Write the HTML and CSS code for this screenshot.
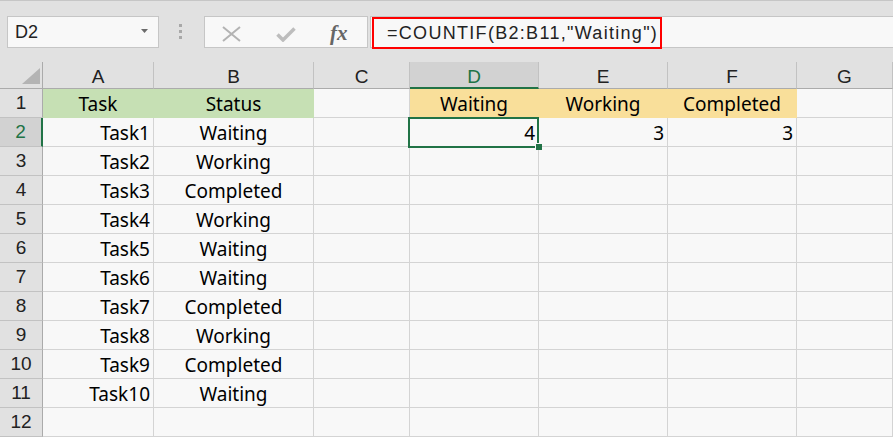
FILE: index.html
```html
<!DOCTYPE html>
<html lang="ja">
<head>
<meta charset="utf-8">
<title>COUNTIF</title>
<link rel="stylesheet" href="styles.css">
</head>
<body>
<div class="toolbar">
  <div class="namebox"><span class="nb-text">D2</span><svg class="caret" width="7" height="4" viewBox="0 0 7 4"><path d="M0 0H7L3.5 4Z" fill="#6b6b6b"/></svg></div>
  <div class="grip"><i></i><i></i><i></i></div>
  <div class="fbtns">
    <svg class="ic-x" width="19" height="16" viewBox="0 0 19 16"><path d="M1 1L18 15M18 1L1 15" stroke="#b3b3b3" stroke-width="2" fill="none"/></svg>
    <svg class="ic-ok" width="20" height="15" viewBox="0 0 20 15"><path d="M1.5 7.5L7 13L18.5 1.5" stroke="#bdbdbd" stroke-width="3.5" fill="none"/></svg>
    <span class="fx">fx</span>
  </div>
  <div class="finput"><span class="formula">=COUNTIF(B2:B11,"Waiting")</span></div>
</div>
<div class="sheet">
  <div class="corner"><svg width="18" height="16" viewBox="0 0 18 16"><path d="M18 0V16H0Z" fill="#b4b4b4"/></svg></div>
  <div class="ch">A</div><div class="ch">B</div><div class="ch">C</div><div class="ch sel">D</div><div class="ch">E</div><div class="ch">F</div><div class="ch">G</div>

  <div class="rh">1</div>
  <div class="c m g">Task</div><div class="c m g">Status</div><div class="c"></div><div class="c m y">Waiting</div><div class="c m y">Working</div><div class="c m y">Completed</div><div class="c"></div>

  <div class="rh sel">2</div>
  <div class="c r">Task1</div><div class="c m">Waiting</div><div class="c"></div><div class="c r active">4<span class="selbox"></span><span class="handle"></span></div><div class="c r">3</div><div class="c r">3</div><div class="c"></div>

  <div class="rh">3</div>
  <div class="c r">Task2</div><div class="c m">Working</div><div class="c"></div><div class="c"></div><div class="c"></div><div class="c"></div><div class="c"></div>

  <div class="rh">4</div>
  <div class="c r">Task3</div><div class="c m">Completed</div><div class="c"></div><div class="c"></div><div class="c"></div><div class="c"></div><div class="c"></div>

  <div class="rh">5</div>
  <div class="c r">Task4</div><div class="c m">Working</div><div class="c"></div><div class="c"></div><div class="c"></div><div class="c"></div><div class="c"></div>

  <div class="rh">6</div>
  <div class="c r">Task5</div><div class="c m">Waiting</div><div class="c"></div><div class="c"></div><div class="c"></div><div class="c"></div><div class="c"></div>

  <div class="rh">7</div>
  <div class="c r">Task6</div><div class="c m">Waiting</div><div class="c"></div><div class="c"></div><div class="c"></div><div class="c"></div><div class="c"></div>

  <div class="rh">8</div>
  <div class="c r">Task7</div><div class="c m">Completed</div><div class="c"></div><div class="c"></div><div class="c"></div><div class="c"></div><div class="c"></div>

  <div class="rh">9</div>
  <div class="c r">Task8</div><div class="c m">Working</div><div class="c"></div><div class="c"></div><div class="c"></div><div class="c"></div><div class="c"></div>

  <div class="rh">10</div>
  <div class="c r">Task9</div><div class="c m">Completed</div><div class="c"></div><div class="c"></div><div class="c"></div><div class="c"></div><div class="c"></div>

  <div class="rh">11</div>
  <div class="c r">Task10</div><div class="c m">Waiting</div><div class="c"></div><div class="c"></div><div class="c"></div><div class="c"></div><div class="c"></div>

  <div class="rh">12</div>
  <div class="c"></div><div class="c"></div><div class="c"></div><div class="c"></div><div class="c"></div><div class="c"></div><div class="c"></div>
</div>
</body>
</html>
```
FILE: styles.css
```css
* { box-sizing: border-box; }
html, body { margin: 0; padding: 0; }
body {
  width: 893px;
  height: 437px;
  overflow: hidden;
  background: #e1e1e1;
  font-family: "Liberation Sans", Arial, sans-serif;
  color: #222;
}

/* ---------- formula toolbar ---------- */
.toolbar {
  height: 62px;
  border-top: 1px solid #c6c6c6;
  padding-top: 15px;
  display: flex;
  align-items: flex-start;
}
.namebox {
  margin-left: 7px;
  width: 152px;
  height: 32px;
  border: 1px solid #c6c6c6;
  background: #f8f8f8;
  display: flex;
  align-items: center;
  justify-content: space-between;
  padding: 0 10px 0 7px;
  font-size: 18px;
}
.caret { margin-bottom: 2px; }
.grip {
  margin-left: 20px;
  margin-top: 8px;
  display: flex;
  flex-direction: column;
  gap: 3px;
}
.grip i { display: block; width: 3px; height: 3px; background: #a8a8a8; }
.fbtns {
  margin-left: 22px;
  width: 164px;
  height: 32px;
  border: 1px solid #c6c6c6;
  background: #f8f8f8;
  display: flex;
  align-items: flex-start;
  padding-left: 17px;
}
.ic-x { margin-top: 9px; }
.ic-ok { margin-left: 35px; margin-top: 10px; }
.fx {
  margin-left: 34px;
  margin-top: 5px;
  font-family: "Liberation Serif", "Times New Roman", serif;
  font-style: italic;
  font-weight: bold;
  font-size: 21px;
  line-height: 22px;
  color: #666;
}
.finput {
  flex: 1;
  margin-left: 2px;
  height: 32px;
  border: 1px solid #c6c6c6;
  border-right: none;
  background: #f8f8f8;
  display: flex;
  align-items: flex-start;
  padding-left: 1px;
}
.formula {
  display: block;
  width: 290px;
  height: 32px;
  border: 2px solid #ff0000;
  padding-left: 13px;
  font-size: 18px;
  letter-spacing: 1.3px;
  line-height: 29px;
  white-space: nowrap;
  color: #222;
}

/* ---------- sheet grid ---------- */
.sheet {
  display: grid;
  grid-template-columns: 43px 111px 160px 96px 129px 129px 129px 1fr;
  grid-template-rows: 27px repeat(12, 29px);
  background: #f8f8f8;
}
.corner {
  background: #e1e1e1;
  border-right: 1px solid #ababab;
  border-bottom: 1px solid #ababab;
  display: flex;
  justify-content: flex-end;
  align-items: flex-end;
  padding: 0 2px 4px 0;
}
.ch {
  background: #e1e1e1;
  border-right: 1px solid #c2c2c2;
  border-bottom: 1px solid #ababab;
  display: flex;
  justify-content: center;
  align-items: center;
  padding-top: 4px;
  font-size: 19px;
  color: #222;
}
.ch.sel {
  background: #d2d2d2;
  color: #217346;
  border-bottom: 2px solid #217346;
  padding-top: 5px;
}
.rh {
  background: #e1e1e1;
  border-right: 1px solid #ababab;
  border-bottom: 1px solid #c2c2c2;
  display: flex;
  justify-content: center;
  align-items: center;
  font-size: 19px;
  color: #222;
}
.rh.sel {
  background: #d2d2d2;
  color: #217346;
  border-right: 2px solid #217346;
}
.c {
  border-right: 1px solid #d4d4d4;
  border-bottom: 1px solid #d4d4d4;
  display: flex;
  align-items: center;
  padding: 2px 3px 0;
  font-family: "Noto Sans", "Open Sans", sans-serif;
  font-size: 19px;
  color: #000;
  white-space: nowrap;
}
.c.r { justify-content: flex-end; }
.c.m { justify-content: center; }
.c.g { background: #c6e0b4; border-color: #c6e0b4; }
.c.y { background: #f9df9a; border-color: #f9df9a; }
.active { position: relative; }
.selbox {
  position: absolute;
  left: -2px;
  top: -1px;
  width: 131px;
  height: 31px;
  border: 2px solid #217346;
}
.handle {
  position: absolute;
  left: 126px;
  top: 26px;
  width: 6px;
  height: 6px;
  background: #217346;
  box-shadow: -1px -1px 0 0 #f8f8f8;
}
```
